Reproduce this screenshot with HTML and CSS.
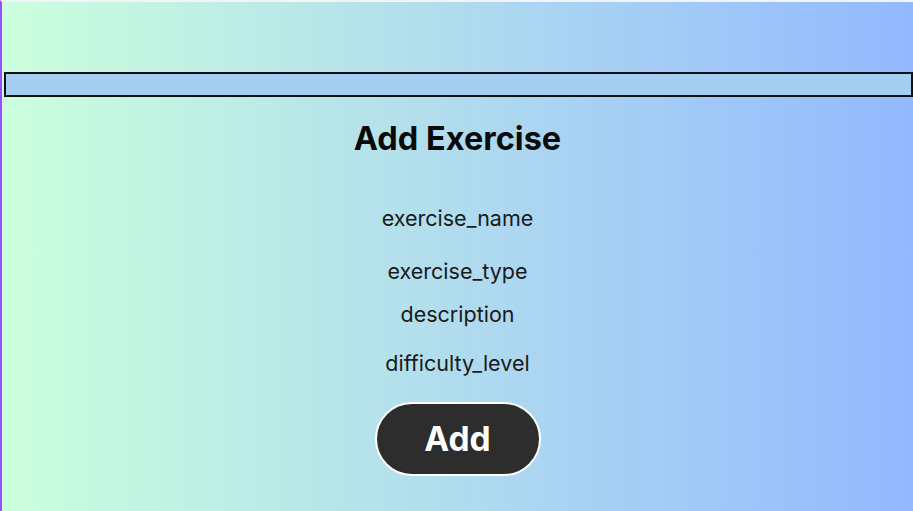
FILE: index.html
```html
<!DOCTYPE html>
<html>
<head>
<meta charset="utf-8">
<link rel="stylesheet" href="styles.css">
</head>
<body>
<div class="page">
  <div class="bar"></div>
  <h1 class="title">Add Exercise</h1>
  <form class="form">
    <label class="field f1">exercise_name</label>
    <label class="field f2">exercise_type</label>
    <label class="field f3">description</label>
    <label class="field f4">difficulty_level</label>
    <button type="button" class="add">Add</button>
  </form>
</div>
</body>
</html>
```
FILE: styles.css
```css
html, body {
  margin: 0;
  padding: 0;
  height: 100%;
}
body {
  background: linear-gradient(to right, #ccffdd 0%, #94b8ff 100%);
  font-family: Inter, "Open Sans", sans-serif;
  overflow: hidden;
}
.page {
  box-sizing: border-box;
  height: 511px;
  border-left: 2px solid #9a4cff;
  border-top: 2px solid #f2f4f6;
  padding-top: 70px;
  display: flex;
  flex-direction: column;
  align-items: center;
}
.bar {
  box-sizing: border-box;
  align-self: flex-start;
  margin-left: 2px;
  width: 909px;
  height: 25px;
  background: #a4cef2;
  border: 2px solid #111;
}
.title {
  margin: 24px 0 0;
  font-size: 32.5px;
  font-weight: 700;
  line-height: 36px;
  color: #0a0a0a;
}
.form {
  display: flex;
  flex-direction: column;
  align-items: center;
}
.field {
  font-size: 21.5px;
  line-height: 24px;
  color: #1a1a1a;
  font-weight: 400;
}
.f1 { margin-top: 49px; }
.f2 { margin-top: 29px; }
.f3 { margin-top: 19px; }
.f4 { margin-top: 25px; }
.add {
  margin-top: 27px;
  width: 166px;
  height: 74px;
  border-radius: 37px;
  background: #2d2d2d;
  border: 2px solid #ffffff;
  color: #fff;
  font-family: Inter, "Open Sans", sans-serif;
  font-weight: 700;
  font-size: 33.5px;
}
```
